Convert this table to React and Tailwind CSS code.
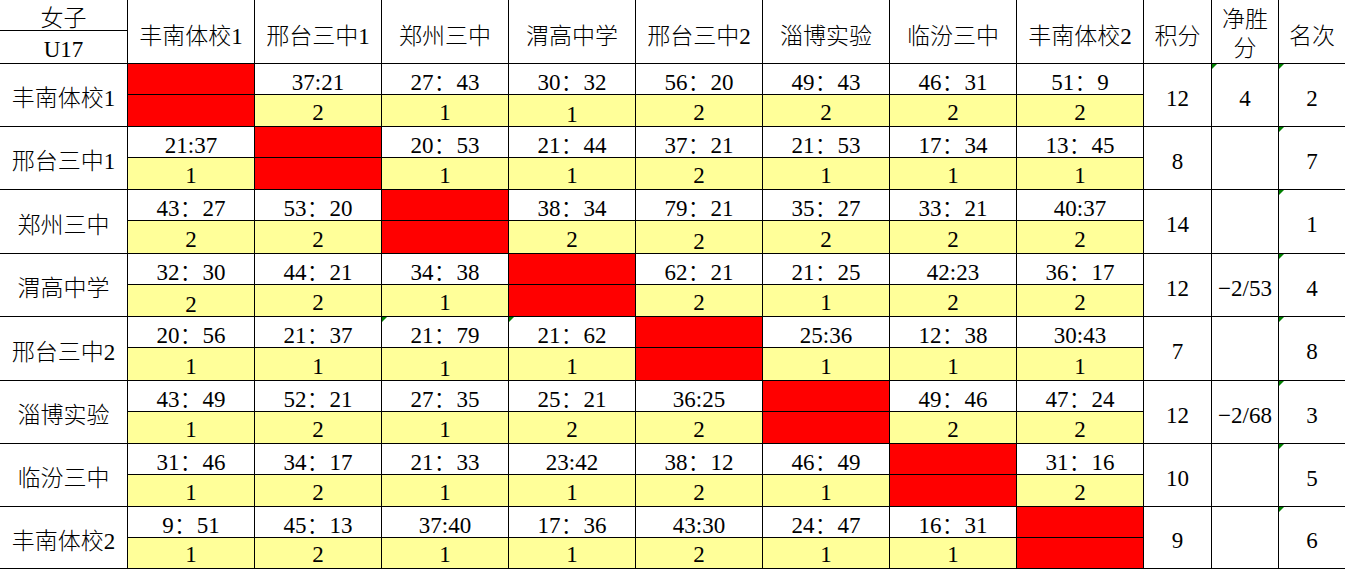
import React from 'react';

const TEAMS = ['丰南体校1', '邢台三中1', '郑州三中', '渭高中学', '邢台三中2', '淄博实验', '临汾三中', '丰南体校2'];

// each match: [score, points, lowered]
const ROWS = [
  { name: '丰南体校1', h: 'h-[63px]', total: '12', net: '4', rank: '2', netMark: true,
    games: [null, ['37:21', '2'], ['27：43', '1'], ['30：32', '1', true], ['56：20', '2'], ['49：43', '2'], ['46：31', '2'], ['51：9', '2']] },
  { name: '邢台三中1', h: 'h-[63px]', total: '8', net: '', rank: '7',
    games: [['21:37', '1'], null, ['20：53', '1'], ['21：44', '1'], ['37：21', '2'], ['21：53', '1'], ['17：34', '1'], ['13：45', '1']] },
  { name: '郑州三中', h: 'h-[64px]', total: '14', net: '', rank: '1',
    games: [['43：27', '2'], ['53：20', '2'], null, ['38：34', '2'], ['79：21', '2', true], ['35：27', '2'], ['33：21', '2'], ['40:37', '2']] },
  { name: '渭高中学', h: 'h-[63px]', total: '12', net: '−2/53', rank: '4',
    games: [['32：30', '2', true], ['44：21', '2'], ['34：38', '1'], null, ['62：21', '2'], ['21：25', '1'], ['42:23', '2'], ['36：17', '2']] },
  { name: '邢台三中2', h: 'h-[64px]', total: '7', net: '', rank: '8', marks: [2, 3],
    games: [['20：56', '1'], ['21：37', '1'], ['21：79', '1', true], ['21：62', '1'], null, ['25:36', '1'], ['12：38', '1'], ['30:43', '1']] },
  { name: '淄博实验', h: 'h-[63px]', total: '12', net: '−2/68', rank: '3',
    games: [['43：49', '1'], ['52：21', '2'], ['27：35', '1'], ['25：21', '2'], ['36:25', '2'], null, ['49：46', '2'], ['47：24', '2']] },
  { name: '临汾三中', h: 'h-[63px]', total: '10', net: '', rank: '5',
    games: [['31：46', '1'], ['34：17', '2'], ['21：33', '1'], ['23:42', '1'], ['38：12', '2'], ['46：49', '1'], null, ['31：16', '2']] },
  { name: '丰南体校2', h: 'h-[62px]', total: '9', net: '', rank: '6',
    games: [['9：51', '1'], ['45：13', '2'], ['37:40', '1'], ['17：36', '1'], ['43:30', '2'], ['24：47', '1'], ['16：31', '1'], null] },
];

// chinese runs get a lighter weight, closer to the thin song typeface
const Txt = ({ children }) =>
  String(children)
    .split(/([\u3000-\u9fff\uff00-\uffef]+)/)
    .filter(Boolean)
    .map((part, i) =>
      /[\u3000-\u9fff\uff00-\uffef]/.test(part) ? (
        <span key={i} className="font-light">{part}</span>
      ) : (
        <span key={i}>{part}</span>
      )
    );

const Mark = () => (
  <div className="absolute top-0 left-0 w-0 h-0 border-t-[5px] border-r-[5px] border-t-[#008000] border-r-transparent" />
);

const GameCell = ({ game, mark }) => {
  if (!game) {
    return (
      <div className="w-[127px] shrink-0 flex flex-col border-r border-b border-black bg-[#ff0000]">
        <div className="h-[31px] border-b border-black" />
        <div className="flex-1" />
      </div>
    );
  }
  const [score, pts, low] = game;
  return (
    <div className="relative w-[127px] shrink-0 flex flex-col border-r border-b border-black">
      {mark && <Mark />}
      <div className="h-[31px] flex items-end justify-center border-b border-black bg-white">
        <span className="leading-none"><Txt>{score}</Txt></span>
      </div>
      <div className={`flex-1 flex items-end justify-center bg-[#ffff99] ${low ? 'pb-0' : 'pb-[2px]'}`}>
        <span className="leading-none">{pts}</span>
      </div>
    </div>
  );
};

export default function App() {
  return (
    <div
      className="w-[1345px] h-[569px] bg-white text-black text-[23px] overflow-hidden"
      style={{ fontFamily: '"Liberation Serif", "Noto Sans CJK SC", serif' }}
    >
      {/* header */}
      <div className="flex h-[64px]">
        <div className="w-[128px] shrink-0 flex flex-col border-r border-b border-black">
          <div className="h-[31px] flex items-center justify-center pt-[7px] border-b border-black leading-none"><Txt>女子</Txt></div>
          <div className="flex-1 flex items-center justify-center pt-[5px] leading-none">U17</div>
        </div>
        {TEAMS.map((t) => (
          <div key={t} className="w-[127px] shrink-0 flex items-center justify-center pt-[10px] border-r border-b border-black leading-none">
            <Txt>{t}</Txt>
          </div>
        ))}
        <div className="w-[68px] shrink-0 flex items-center justify-center pt-[10px] border-r border-b border-black leading-none"><Txt>积分</Txt></div>
        <div className="w-[67px] shrink-0 flex items-center justify-center pt-[5px] border-r border-b border-black leading-[29px] text-center font-light">
          净胜<br />分
        </div>
        <div className="w-[66px] shrink-0 flex items-center justify-center pt-[10px] border-b border-black leading-none"><Txt>名次</Txt></div>
      </div>

      {ROWS.map((r) => (
        <div key={r.name} className={`flex ${r.h}`}>
          <div className="w-[128px] shrink-0 flex items-center justify-center pt-[7px] border-r border-b border-black leading-none">
            <Txt>{r.name}</Txt>
          </div>
          {r.games.map((g, i) => (
            <GameCell key={i} game={g} mark={r.marks && r.marks.includes(i)} />
          ))}
          <div className="w-[68px] shrink-0 flex items-center justify-center pt-[6px] border-r border-b border-black leading-none">
            {r.total}
          </div>
          <div className="relative w-[67px] shrink-0 flex items-center justify-center pt-[6px] border-r border-b border-black leading-none whitespace-nowrap">
            {r.netMark && <Mark />}
            {r.net}
          </div>
          <div className="relative w-[66px] shrink-0 flex items-center justify-center pt-[6px] border-b border-black leading-none">
            <Mark />
            {r.rank}
          </div>
        </div>
      ))}
    </div>
  );
}
